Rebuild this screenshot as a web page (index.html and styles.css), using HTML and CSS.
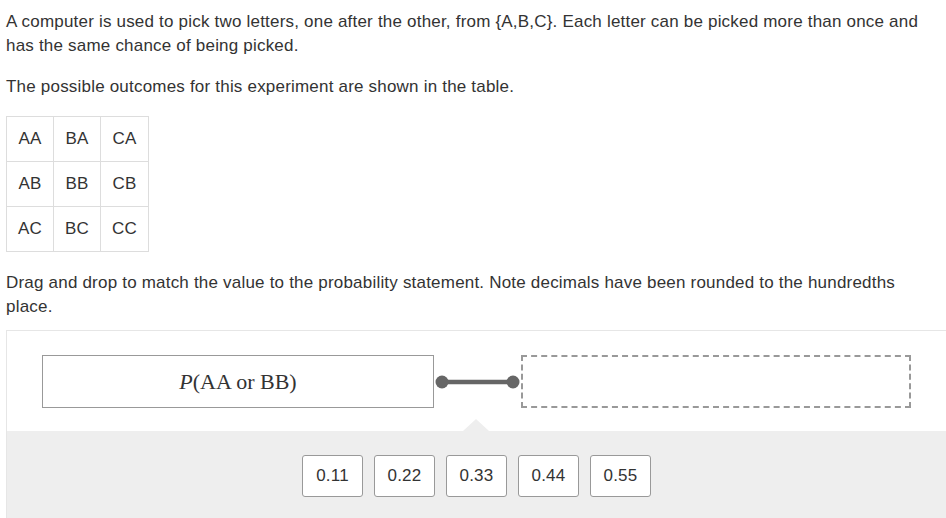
FILE: index.html
```html
<!DOCTYPE html>
<html>
<head>
<meta charset="utf-8">
<link rel="stylesheet" href="styles.css">
</head>
<body>
<div class="page">
  <p class="text">A computer is used to pick two letters, one after the other, from {A,B,C}. Each letter can be picked more than once and has the same chance of being picked.</p>
  <p class="text">The possible outcomes for this experiment are shown in the table.</p>
  <table class="outcomes">
    <tr><td>AA</td><td>BA</td><td>CA</td></tr>
    <tr><td>AB</td><td>BB</td><td>CB</td></tr>
    <tr><td>AC</td><td>BC</td><td>CC</td></tr>
  </table>
  <p class="text instr">Drag and drop to match the value to the probability statement. Note decimals have been rounded to the hundredths place.</p>
  <div class="panel">
    <div class="match-area">
      <div class="statement"><span class="math"><i>P</i>(AA or BB)</span></div>
      <svg class="connector" width="87" height="20" viewBox="0 0 87 20">
        <line x1="8" y1="10" x2="79" y2="10" stroke="#666" stroke-width="4.5"/>
        <circle cx="8" cy="10" r="6.5" fill="#666"/>
        <circle cx="79" cy="10" r="6.5" fill="#666"/>
      </svg>
      <div class="dropzone"></div>
    </div>
    <div class="tray">
      <div class="tile">0.11</div>
      <div class="tile">0.22</div>
      <div class="tile">0.33</div>
      <div class="tile">0.44</div>
      <div class="tile">0.55</div>
    </div>
  </div>
</div>
</body>
</html>
```
FILE: styles.css
```css
html, body {
  margin: 0;
  padding: 0;
  background: #fff;
}
body {
  font-family: "Liberation Sans", Arial, sans-serif;
  font-size: 17px;
  letter-spacing: 0.2px;
  color: #333;
  overflow: hidden;
}
.page {
  padding: 10px 0 0 6px;
  width: 940px;
}
.text {
  margin: 0 12px 17px 0;
  line-height: 24px;
}
.outcomes {
  border-collapse: collapse;
  margin: 1px 0 19px 0;
}
.outcomes td {
  border: 1px solid #ddd;
  height: 44px;
  padding: 0 11px;
  text-align: center;
  line-height: 20px;
}
.instr {
  margin-bottom: 11px;
}
.panel {
  width: 940px;
  border-top: 1px solid #e6e6e6;
  border-left: 1px solid #e6e6e6;
  box-sizing: border-box;
}
.match-area {
  display: flex;
  align-items: center;
  justify-content: center;
  padding: 24px 0 23px 0;
  background: #fff;
}
.statement {
  width: 392px;
  height: 53px;
  box-sizing: border-box;
  border: 1px solid #999;
  display: flex;
  align-items: center;
  justify-content: center;
}
.math {
  font-family: "Liberation Serif", "Times New Roman", serif;
  font-size: 22px;
  letter-spacing: 0;
  color: #333;
}
.connector {
  display: block;
  flex: none;
}
.dropzone {
  width: 390px;
  height: 53px;
  box-sizing: border-box;
  border: 2px dashed #999;
}
.tray {
  position: relative;
  background: #eee;
  display: flex;
  justify-content: center;
  gap: 11px;
  padding: 24px 0 40px 0;
}
.tray::before {
  content: "";
  position: absolute;
  left: 50%;
  top: -12px;
  margin-left: -14px;
  border-left: 13px solid transparent;
  border-right: 13px solid transparent;
  border-bottom: 12px solid #eee;
}
.tile {
  width: 61px;
  height: 42px;
  box-sizing: border-box;
  border: 1px solid #999;
  border-radius: 3px;
  background: #fff;
  display: flex;
  align-items: center;
  justify-content: center;
  font-size: 17px;
  letter-spacing: 0.2px;
  color: #333;
}
```
